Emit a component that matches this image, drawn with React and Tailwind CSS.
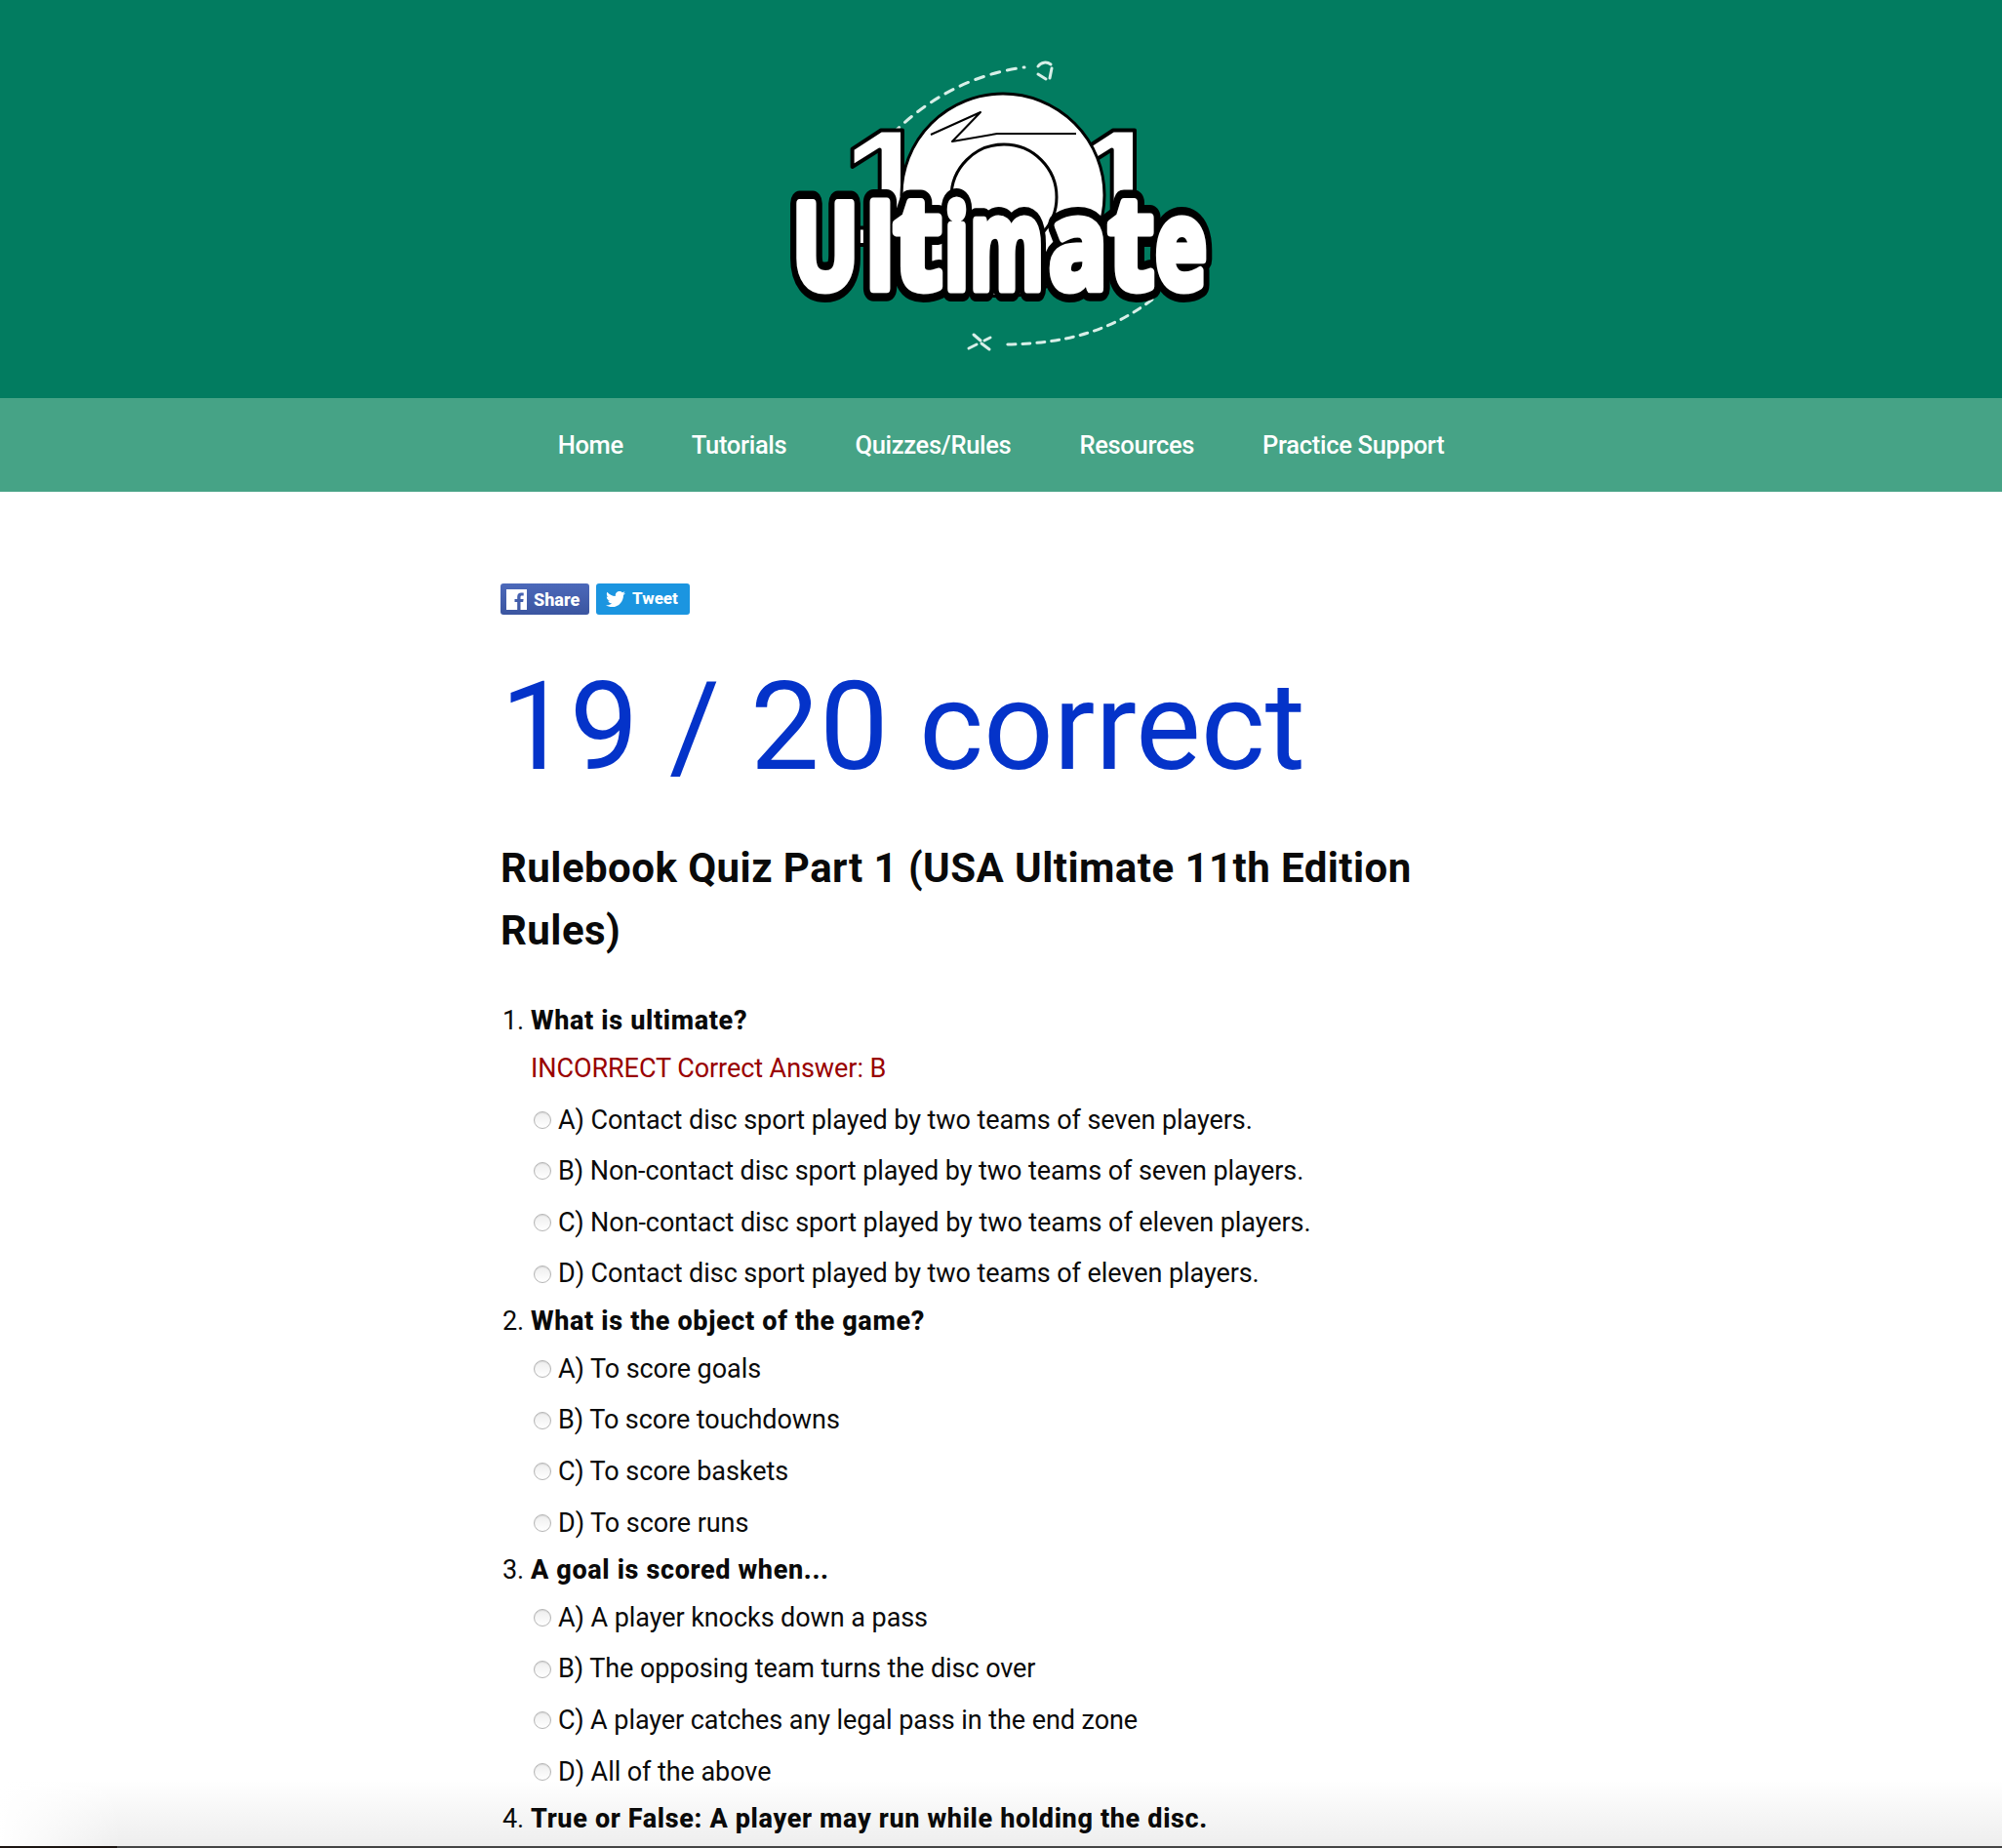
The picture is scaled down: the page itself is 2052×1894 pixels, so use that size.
import { FaTwitter } from "react-icons/fa";

const links = ["Home", "Tutorials", "Quizzes/Rules", "Resources", "Practice Support"];

const questions = [
    {
        title: "What is ultimate?",
        wrong: "INCORRECT Correct Answer: B",
        options: [
            "A) Contact disc sport played by two teams of seven players.",
            "B) Non-contact disc sport played by two teams of seven players.",
            "C) Non-contact disc sport played by two teams of eleven players.",
            "D) Contact disc sport played by two teams of eleven players.",
        ],
    },
    {
        title: "What is the object of the game?",
        options: ["A) To score goals", "B) To score touchdowns", "C) To score baskets", "D) To score runs"],
    },
    {
        title: "A goal is scored when...",
        options: [
            "A) A player knocks down a pass",
            "B) The opposing team turns the disc over",
            "C) A player catches any legal pass in the end zone",
            "D) All of the above",
        ],
    },
    {
        title: "True or False: A player may run while holding the disc.",
        options: [],
    },
];

// x, width and size of every logo letter, the face is stretched to the bubble shapes
const letters = [
    { c: "U", x: 52, w: 68, size: 122 },
    { c: "l", x: 128, w: 28, size: 116 },
    { c: "t", x: 156, w: 50, size: 132 },
    { c: "i", x: 208, w: 25, size: 118 },
    { c: "m", x: 234, w: 76, size: 128 },
    { c: "a", x: 315, w: 60, size: 128 },
    { c: "t", x: 376, w: 47, size: 132 },
    { c: "e", x: 424, w: 53, size: 128 },
];

const Logo = () => {
    const one = { fontFamily: "'Liberation Sans', sans-serif", fontWeight: 700, fontSize: 170 };
    return (
        <svg width="520" height="360" viewBox="0 0 520 360" className="mt-[30px] mr-[12px]">
            <defs>
                {letters.map((l, i) => (
                    <text
                        key={i}
                        id={`logo-letter-${i}`}
                        x={l.x}
                        y="266"
                        textLength={l.w}
                        lengthAdjust="spacingAndGlyphs"
                        strokeLinejoin="round"
                        style={{ fontFamily: "'Open Sans', sans-serif", fontWeight: 700, fontSize: l.size }}
                    >
                        {l.c}
                    </text>
                ))}
            </defs>
            <g fill="none" stroke="#d8efe8" strokeWidth="3" strokeLinecap="round">
                <path d="M155 107C200 62 250 44 290 39" strokeDasharray="9 8" />
                <path d="M304 38A9 9 0 0 1 317 36M318 40L316 50M312 51L304 46" />
                <path d="M421 277C380 308 335 322 272 323" strokeDasharray="8 7" />
                <path d="M238 313L245 319M249 319L255 316M246 322L254 328M233 327L241 323" />
            </g>
            <text x="102" y="221" fill="#fff" stroke="#000" strokeWidth="4" strokeLinejoin="round" style={one}>1</text>
            <text x="340" y="221" fill="#fff" stroke="#000" strokeWidth="4" strokeLinejoin="round" style={one}>1</text>
            <circle cx="268" cy="170" r="104" fill="#fff" stroke="#000" strokeWidth="3" />
            <circle cx="269" cy="172" r="54" fill="#fff" stroke="#000" strokeWidth="3" />
            <path d="M194 108L245 85L216 115L262 107L343 107" fill="none" stroke="#000" strokeWidth="2" strokeLinejoin="round" />
            <g fill="#000" stroke="#000" strokeWidth="26">
                {letters.map((l, i) => (
                    <use key={i} href={`#logo-letter-${i}`} />
                ))}
            </g>
            {letters.map((l, i) => (
                <g key={i}>
                    <use href={`#logo-letter-${i}`} fill="#000" stroke="#000" strokeWidth="13" />
                    <use href={`#logo-letter-${i}`} fill="#fff" stroke="#fff" strokeWidth="9" />
                </g>
            ))}
        </svg>
    );
};

const Radio = () => (
    <span className="mx-[3px] w-[18px] h-[18px] shrink-0 rounded-full border border-[#b5b5b5] bg-gradient-to-b from-[#eeeeee] to-white shadow-[inset_0_1px_1px_rgba(0,0,0,0.1)]" />
);

const Question = ({ q, n }) => (
    <li className="relative pl-[31px]">
        <span className="absolute left-[2px] top-0 leading-[44.5px]">{n}.</span>
        <div className="h-[44.5px] leading-[44.5px] font-extrabold tracking-[0.65px]">{q.title}</div>
        {q.wrong && <div className="h-[53px] leading-[53px] text-[#990000]">{q.wrong}</div>}
        {q.options.map((o) => (
            <div key={o} className="h-[52.65px] flex items-center gap-[4px]">
                <Radio />
                <span>{o}</span>
            </div>
        ))}
    </li>
);

export default function App() {
    return (
        <div className="relative h-[1894px] overflow-hidden bg-white text-[#0a0a0a] font-['Roboto',sans-serif]">
            <header className="h-[408px] bg-[#027c60] flex justify-center">
                <Logo />
            </header>
            <nav className="h-[96px] bg-[#46a386] flex items-center justify-center gap-[70px] text-white text-[25.5px] font-medium tracking-[-0.3px]">
                {links.map((l) => (
                    <a key={l} href="#">{l}</a>
                ))}
            </nav>
            <main className="w-[1026px] mx-auto pt-[94px]">
                <div className="flex gap-[7px]">
                    <div className="w-[91px] h-[32px] rounded-[3px] bg-gradient-to-b from-[#4c69ba] to-[#3b55a0] flex items-center gap-[7px] pl-[6px] text-white text-[18px] font-extrabold">
                        <svg width="21" height="21" viewBox="0 0 21 21" className="shrink-0">
                            <path fill="#fff" d="M0 0H21V21H14.5V13H17.2L17.6 9.9H14.5V8C14.5 7.1 14.8 6.5 16 6.5H17.7V3.7C17.4 3.7 16.4 3.6 15.2 3.6C12.8 3.6 11.2 5.1 11.2 7.7V9.9H8.5V13H11.2V21H0Z" />
                        </svg>
                        <span>Share</span>
                    </div>
                    <div className="w-[96px] h-[32px] rounded-[3px] bg-[#1b95e0] flex items-center gap-[7px] pl-[10px] text-white text-[17px] font-extrabold">
                        <FaTwitter className="text-[20px]" />
                        <span>Tweet</span>
                    </div>
                </div>
                <h1 className="mt-[40px] text-[126px] leading-[150px] text-[#0433c9]">19 / 20 correct</h1>
                <h2 className="mt-[38px] text-[42px] leading-[64px] font-bold tracking-[0.45px]">Rulebook Quiz Part 1 (USA Ultimate 11th Edition Rules)</h2>
                <ol className="mt-[38px] text-[27px] tracking-[-0.07px]">
                    {questions.map((q, i) => (
                        <Question key={q.title} q={q} n={i + 1} />
                    ))}
                </ol>
            </main>
            <div className="absolute inset-x-0 bottom-0 h-[70px] pointer-events-none bg-gradient-to-b from-transparent to-black/[0.07]" />
            <div className="absolute left-0 bottom-0 w-[125px] h-[70px] pointer-events-none bg-gradient-to-r from-white to-transparent" />
            <div className="absolute inset-x-0 bottom-0 h-[2px] bg-[#444444]" />
            <div className="absolute left-0 bottom-0 w-[120px] h-[2px] bg-[#1c1512]" />
        </div>
    );
}
